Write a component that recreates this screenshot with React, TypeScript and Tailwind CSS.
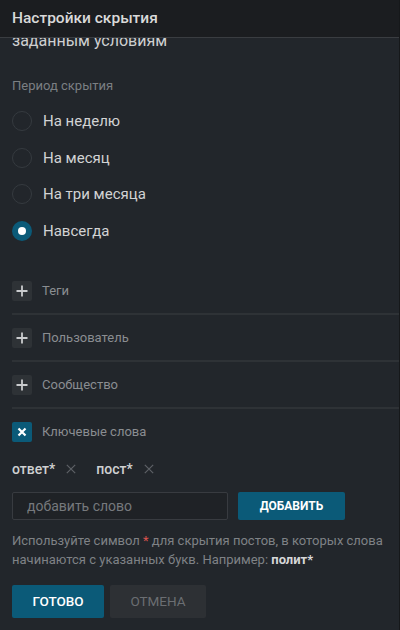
import { useState } from "react";

const periods = ["На неделю", "На месяц", "На три месяца", "Навсегда"];

const sections = [
  { label: "Теги", open: false },
  { label: "Пользователь", open: false },
  { label: "Сообщество", open: false },
  { label: "Ключевые слова", open: true },
];

function PlusIcon() {
  return (
    <svg viewBox="0 0 20 20" className="h-5 w-5">
      <path d="M10 4.5v11M4.5 10h11" stroke="#c9cbcd" strokeWidth="1.8" />
    </svg>
  );
}

function CrossIcon() {
  return (
    <svg viewBox="0 0 20 20" className="h-5 w-5">
      <path d="M6.5 6.5l7 7M13.5 6.5l-7 7" stroke="#ffffff" strokeWidth="2.2" />
    </svg>
  );
}

function RemoveIcon() {
  return (
    <svg viewBox="0 0 10 10" className="h-[10px] w-[10px]">
      <path d="M0.8 0.8l8.4 8.4M9.2 0.8l-8.4 8.4" stroke="#5d6166" strokeWidth="1.2" />
    </svg>
  );
}

export default function App() {
  const [period, setPeriod] = useState(3);
  const words = ["ответ*", "пост*"];

  return (
    <div
      className="flex h-[630px] w-[400px] flex-col overflow-hidden border-r border-[#16181a] bg-[#22262b]"
      style={{ fontFamily: "Roboto, 'Noto Sans', sans-serif" }}
    >
      {/* Header */}
      <div className="relative z-10 flex h-[38px] shrink-0 items-center border-b border-[#3a3d41] bg-[#1b1d20] px-3">
        <span className="text-[15.5px] font-medium text-[#d9d9d9]">Настройки скрытия</span>
      </div>

      {/* Content */}
      <div className="flex-1 px-3">
        <div className="-mt-[7px] text-[16px] leading-[20px] text-[#cfd0d1]">заданным условиям</div>

        <div className="mt-[26px] text-[13px] leading-[18px] text-[#7b7f83]">Период скрытия</div>

        <div className="mt-[8px] flex flex-col">
          {periods.map((p, i) => (
            <button
              key={p}
              onClick={() => setPeriod(i)}
              className="flex h-[36.5px] items-center gap-[11px] text-left"
            >
              {period === i ? (
                <span className="flex h-[20px] w-[20px] items-center justify-center rounded-full bg-[#0b5a78]">
                  <span className="h-[8px] w-[8px] rounded-full bg-white" />
                </span>
              ) : (
                <span className="h-[20px] w-[20px] rounded-full border-[1.5px] border-[#353a3f]" />
              )}
              <span className="text-[15px] text-[#d2d3d4]">{p}</span>
            </button>
          ))}
        </div>

        <div className="mt-[19px] flex flex-col">
          {sections.map((s, i) => (
            <div key={s.label}>
              {i > 0 && <div className="-mr-3 h-[2px] bg-[#2e3236]" />}
              <div className="flex h-[45px] items-center gap-[10px]">
                <span
                  className={`flex h-[20px] w-[20px] items-center justify-center rounded-[2px] ${
                    s.open ? "bg-[#0b5a78]" : "bg-[#2e3236]"
                  }`}
                >
                  {s.open ? <CrossIcon /> : <PlusIcon />}
                </span>
                <span className="text-[13px] text-[#8a8d91]">{s.label}</span>
              </div>
            </div>
          ))}
        </div>

        {/* Keywords */}
        <div className="mt-[5px] flex h-[20px] items-center gap-[20px]">
          {words.map((w) => (
            <div key={w} className="flex items-center gap-[11px]">
              <span className="text-[14px] font-medium text-[#cfd0d1]">{w}</span>
              <RemoveIcon />
            </div>
          ))}
        </div>

        <div className="mt-[13px] flex items-center gap-[10px]">
          <input
            placeholder="добавить слово"
            className="h-[28px] w-[216px] rounded-[2px] border border-[#383b40] bg-[#1f2226] px-[14px] text-[14px] text-[#cfd0d1] placeholder:text-[#76797d] outline-none"
          />
          <button className="h-[28px] w-[107px] rounded-[2px] bg-[#0b5a78] text-[12px] font-bold text-white">
            ДОБАВИТЬ
          </button>
        </div>

        <p className="mt-[11px] text-[13px] leading-[19px] text-[#7f8286]">
          Используйте символ <span className="text-[#d9534f]">*</span> для скрытия постов, в которых слова
          начинаются с указанных букв. Например: <span className="font-bold text-[#d6d7d8]">полит*</span>
        </p>

        <div className="mt-[16px] flex gap-[6px]">
          <button className="h-[33px] w-[92px] rounded-[2px] bg-[#0b5a78] text-[13.5px] font-medium text-white">
            ГОТОВО
          </button>
          <button className="h-[33px] w-[96px] rounded-[2px] bg-[#2d3034] text-[13.5px] text-[#6b6e72]">
            ОТМЕНА
          </button>
        </div>
      </div>
    </div>
  );
}
